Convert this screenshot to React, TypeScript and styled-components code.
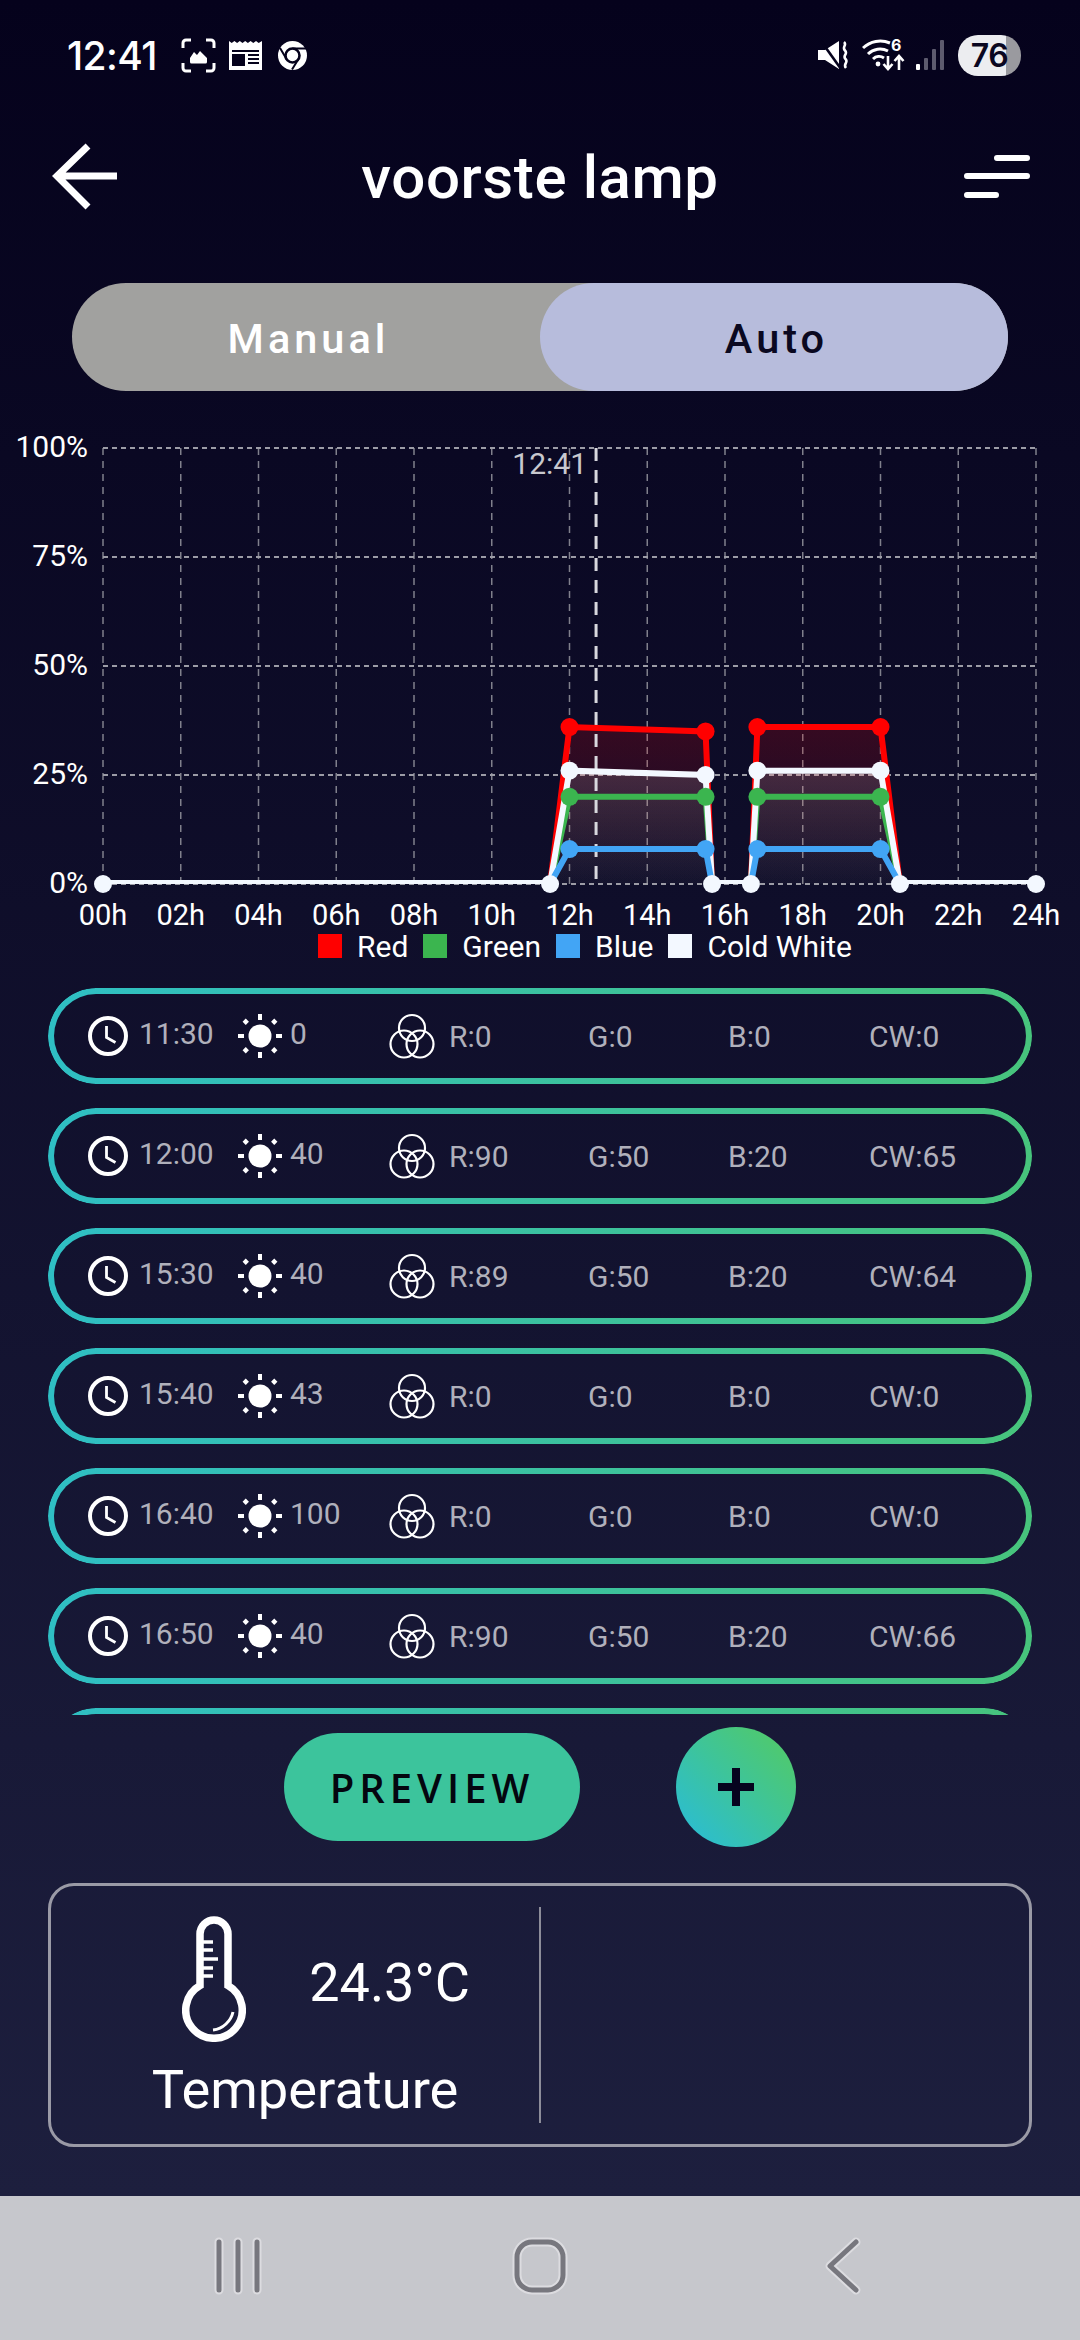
import React from "react";
import styled, { createGlobalStyle } from "styled-components";

const GlobalStyle = createGlobalStyle`
  html, body {
    margin: 0;
    padding: 0;
    background: #c6c7cc;
  }
  * {
    box-sizing: border-box;
  }
`;

const Screen = styled.div`
  width: 1080px;
  height: 2340px;
  display: flex;
  flex-direction: column;
  overflow: hidden;
  font-family: Roboto, "Liberation Sans", sans-serif;
`;

const Main = styled.div`
  height: 2196px;
  display: flex;
  flex-direction: column;
  background: linear-gradient(180deg, #05021c 0%, #1d1f3e 100%);
`;

const StatusBar = styled.div`
  height: 110px;
  display: flex;
  align-items: center;
  justify-content: space-between;
  padding: 0 59px 0 67px;
  color: #fff;
`;

const StatusGroup = styled.div`
  display: flex;
  align-items: center;
`;

const StatusIcon = styled.svg<{ $gap?: number }>`
  display: block;
  margin-left: ${(p) => p.$gap ?? 0}px;
`;

const Clock = styled.span`
  width: 114px;
  font-family: Inter, Roboto, sans-serif;
  font-size: 39px;
  font-weight: 500;
  letter-spacing: -0.6px;
`;

const Battery = styled.span`
  width: 63px;
  height: 41px;
  margin-left: 14px;
  border-radius: 20px;
  display: flex;
  align-items: center;
  justify-content: center;
  background: linear-gradient(90deg, #ecedf0 76%, #9a9a9f 76%);
  color: #0a0720;
  font-family: Inter, Roboto, sans-serif;
  font-size: 32px;
  font-weight: 600;
  letter-spacing: -0.5px;
`;

const Header = styled.div`
  height: 134px;
  display: flex;
  align-items: center;
  justify-content: space-between;
  padding: 0 48px;
`;

const Title = styled.h1`
  margin: 0;
  color: #fff;
  font-size: 60px;
  font-weight: 500;
  letter-spacing: 0.6px;
`;

const ModeToggle = styled.div`
  height: 108px;
  margin: 39px 72px 0;
  display: grid;
  grid-template-columns: 1fr 1fr;
  border-radius: 54px;
  background: #a1a19f;
`;

const ModeOption = styled.div<{ $active?: boolean }>`
  padding: 3px 0 0 5px;
  display: flex;
  align-items: center;
  justify-content: center;
  border-radius: 54px;
  font-size: 41.5px;
  font-weight: 500;
  letter-spacing: 4px;
  color: ${(p) => (p.$active ? "#0a0820" : "#fff")};
  background: ${(p) => (p.$active ? "#b7bcdc" : "transparent")};
`;

const ChartSvg = styled.svg`
  display: block;
  margin-top: 29px;
  width: 1080px;
  height: 510px;
  font-family: Roboto, sans-serif;
`;

const Legend = styled.div`
  height: 34px;
  margin-top: -1px;
  padding-left: 318px;
  display: flex;
  align-items: center;
  gap: 15px;
`;

const LegendItem = styled.div`
  display: flex;
  align-items: center;
  gap: 15px;
  color: #fff;
  font-size: 30px;
`;

const Swatch = styled.span<{ $color: string }>`
  width: 24px;
  height: 24px;
  background: ${(p) => p.$color};
`;

const ScheduleList = styled.div`
  height: 727px;
  margin: 25px 48px 0;
  display: flex;
  flex-direction: column;
  gap: 24px;
  overflow: hidden;
`;

const ScheduleRow = styled.div`
  position: relative;
  flex: none;
  height: 96px;
  padding-left: 40px;
  display: grid;
  grid-template-columns: 150px 151px 60px 139px 140px 141px 1fr;
  align-items: center;
  color: #b0b0bb;
  font-size: 30px;

  &::before {
    content: "";
    position: absolute;
    inset: 0;
    padding: 6px;
    border-radius: 48px;
    background: linear-gradient(90deg, #2fbfc4 0%, #47c47c 100%);
    -webkit-mask:
      linear-gradient(#000 0 0) content-box,
      linear-gradient(#000 0 0);
    -webkit-mask-composite: xor;
    mask-composite: exclude;
  }
`;

const Cell = styled.div`
  display: flex;
  align-items: center;
`;

const TimeCell = styled(Cell)`
  gap: 11px;
`;

const LevelCell = styled(Cell)`
  gap: 8px;
`;

const RaisedValue = styled.span`
  margin-bottom: 6px;
`;

const Channel = styled.span``;

const Actions = styled.div`
  margin-top: 12px;
  display: flex;
  align-items: center;
  justify-content: center;
  gap: 96px;
`;

const PreviewButton = styled.button`
  width: 296px;
  height: 108px;
  border: 0;
  border-radius: 54px;
  background: #3cc49c;
  color: #04060f;
  font-family: "Open Sans", sans-serif;
  font-size: 40px;
  font-weight: 600;
  letter-spacing: 5px;
`;

const AddButton = styled.button`
  width: 120px;
  height: 120px;
  padding: 0;
  border: 0;
  border-radius: 50%;
  display: flex;
  align-items: center;
  justify-content: center;
  background: linear-gradient(45deg, #2cbdd0 10%, #3dc49c 50%, #50c96c 90%);
`;

const SensorCard = styled.div`
  height: 264px;
  margin: 36px 48px 0;
  padding: 21px 0;
  display: grid;
  grid-template-columns: 490px 1fr;
  border: 3px solid #9a9aa6;
  border-radius: 26px;
`;

const SensorPanel = styled.div`
  padding-left: 20px;
  display: flex;
  flex-direction: column;
  align-items: center;
  border-right: 2px solid #8d8d9a;
  color: #fff;
`;

const SensorReading = styled.div`
  display: flex;
  align-items: center;
  gap: 63px;
  margin: 9px 0 0 42px;
  font-size: 54px;
`;

const SensorValue = styled.span`
  margin-top: 6px;
`;

const SensorName = styled.div`
  margin-top: 16px;
  font-size: 54.3px;
`;

const NavBar = styled.div`
  height: 144px;
  display: flex;
  background: #c6c7cc;
`;

const NavSvg = styled.svg`
  display: block;
`;

type Series = { name: string; color: string; values: number[]; fillTop: number };

const hours = [0, 11.5, 12, 15.5, 15.667, 16.667, 16.833, 20, 20.5, 24];

const series: Series[] = [
  { name: "Red", color: "#ff0000", values: [0, 0, 36, 35, 0, 0, 36, 36, 0, 0], fillTop: 0.17 },
  { name: "Green", color: "#3bb54f", values: [0, 0, 20, 20, 0, 0, 20, 20, 0, 0], fillTop: 0.02 },
  { name: "Cold White", color: "#f3f8ff", values: [0, 0, 26, 25, 0, 0, 26, 26, 0, 0], fillTop: 0.13 },
  { name: "Blue", color: "#42a5f5", values: [0, 0, 8, 8, 0, 0, 8, 8, 0, 0], fillTop: 0.02 },
];

const legend = [
  { name: "Red", color: "#ff0000" },
  { name: "Green", color: "#3bb54f" },
  { name: "Blue", color: "#42a5f5" },
  { name: "Cold White", color: "#f3f8ff" },
];

const rows = [
  { time: "11:30", level: 0, r: 0, g: 0, b: 0, cw: 0 },
  { time: "12:00", level: 40, r: 90, g: 50, b: 20, cw: 65 },
  { time: "15:30", level: 40, r: 89, g: 50, b: 20, cw: 64 },
  { time: "15:40", level: 43, r: 0, g: 0, b: 0, cw: 0 },
  { time: "16:40", level: 100, r: 0, g: 0, b: 0, cw: 0 },
  { time: "16:50", level: 40, r: 90, g: 50, b: 20, cw: 66 },
  { time: "20:00", level: 40, r: 90, g: 50, b: 20, cw: 66 },
];

// chart coordinates are relative to the svg, which starts at y=420
const X0 = 103;
const HOUR = 38.875;
const Y0 = 464;
const PERCENT = 4.36;
const px = (h: number) => X0 + h * HOUR;
const py = (v: number) => Y0 - v * PERCENT;

const pointList = (s: Series, from = 0, to = hours.length) =>
  hours
    .slice(from, to)
    .map((h, i) => `${px(h)},${py(s.values[from + i])}`)
    .join(" ");

const Chart = () => {
  const ticks = Array.from({ length: 13 }, (_, i) => i * 2);
  const nowX = px(12 + 41 / 60);
  return (
    <ChartSvg viewBox="0 0 1080 510">
      <defs>
        {series.map((s) => (
          <linearGradient
            key={s.name}
            id={`fill-${s.name.replace(" ", "")}`}
            gradientUnits="userSpaceOnUse"
            x1="0"
            x2="0"
            y1={py(Math.max(...s.values))}
            y2={Y0}
          >
            <stop offset="0" stopColor={s.color} stopOpacity={s.fillTop} />
            <stop offset="1" stopColor={s.color} stopOpacity={0.01} />
          </linearGradient>
        ))}
      </defs>

      {ticks.map((t) => (
        <line key={t} x1={px(t)} x2={px(t)} y1={Y0 - 436} y2={Y0} stroke="#80808c" strokeWidth="1.5" strokeDasharray="7 6" />
      ))}
      {[0, 25, 50, 75, 100].map((v) => (
        <line key={v} x1={X0} x2={px(24)} y1={py(v)} y2={py(v)} stroke="#9c9ca6" strokeWidth="2" strokeDasharray="5 4" />
      ))}

      {series.map((s) => (
        <polygon key={s.name} fill={`url(#fill-${s.name.replace(" ", "")})`} points={pointList(s)} />
      ))}

      <line x1={nowX} x2={nowX} y1={Y0 - 436} y2={Y0} stroke="#d8d8de" strokeWidth="3" strokeDasharray="13 9" />
      <text x={nowX - 9} y="54" fill="#c8c8ce" fontSize="30" textAnchor="end">
        12:41
      </text>

      {series.map((s) => (
        <g key={s.name} fill="none" stroke={s.color} strokeWidth="6">
          <polyline points={pointList(s, 1, 5)} />
          <polyline points={pointList(s, 5, 9)} />
        </g>
      ))}
      <g stroke="#f3f8ff" strokeWidth="4">
        <line x1={X0} x2={px(11.5)} y1={Y0 - 2} y2={Y0 - 2} />
        <line x1={px(15.667)} x2={px(16.667)} y1={Y0 - 2} y2={Y0 - 2} />
        <line x1={px(20.5)} x2={px(24)} y1={Y0 - 2} y2={Y0 - 2} />
      </g>
      {[series[0], series[2], series[1], series[3]].map((s) =>
        hours.map((h, i) =>
          s.values[i] > 0 ? <circle key={s.name + h} cx={px(h)} cy={py(s.values[i])} r="9" fill={s.color} /> : null,
        ),
      )}
      {hours
        .filter((_, i) => series[0].values[i] === 0)
        .map((h) => (
          <circle key={h} cx={px(h)} cy={Y0} r="9" fill="#f3f8ff" />
        ))}

      {[0, 25, 50, 75, 100].map((v) => (
        <text key={v} x="88" y={py(v) + 9} fill="#fff" fontSize="30" textAnchor="end">
          {v}%
        </text>
      ))}
      {ticks.map((t) => (
        <text key={t} x={px(t)} y="505" fill="#fff" fontSize="29" textAnchor="middle">
          {String(t).padStart(2, "0")}h
        </text>
      ))}
    </ChartSvg>
  );
};

const ClockIcon = () => (
  <svg width="40" height="40" viewBox="0 0 40 40" fill="none" stroke="#fff">
    <circle cx="20" cy="20" r="18" strokeWidth="4" />
    <path d="M18.500 10v11.500l9 5" strokeWidth="2.800" />
  </svg>
);

const SunIcon = () => (
  <svg width="44" height="44" viewBox="0 0 44 44" fill="#fff">
    <circle cx="22" cy="22" r="11.500" />
    <rect x="20" y="0" width="4" height="6" />
    <rect x="20" y="38" width="4" height="6" />
    <rect x="0" y="20" width="6" height="4" />
    <rect x="38" y="20" width="6" height="4" />
    <rect x="5.500" y="5.500" width="4.500" height="4.500" transform="rotate(45 7.750 7.750)" />
    <rect x="34" y="5.500" width="4.500" height="4.500" transform="rotate(45 36.250 7.750)" />
    <rect x="5.500" y="34" width="4.500" height="4.500" transform="rotate(45 7.750 36.250)" />
    <rect x="34" y="34" width="4.500" height="4.500" transform="rotate(45 36.250 36.250)" />
  </svg>
);

const MixIcon = () => (
  <svg width="46" height="46" viewBox="0 0 46 46" fill="none" stroke="#fff" strokeWidth="2.200">
    <circle cx="23" cy="15" r="13" />
    <circle cx="15" cy="31" r="13.500" />
    <circle cx="31" cy="31" r="13.500" />
  </svg>
);

const ThermometerIcon = () => (
  <svg width="64" height="126" viewBox="0 0 64 126" fill="none" stroke="#fff">
    <path d="M18 69.500V18a14 14 0 0 1 28 0v51.500a28.250 28.250 0 1 1-28 0Z" strokeWidth="7.500" />
    <path d="M18 26h13M18 34h13M18 43h18M18 52h13M18 60h13" strokeWidth="3.600" />
    <path d="M51 96c-2 9-10 17-20 18" strokeWidth="3" />
  </svg>
);

const App = () => {
  return (
    <>
      <GlobalStyle />
      <Screen>
        <Main>
          <StatusBar>
            <StatusGroup>
              <Clock>12:41</Clock>
              <StatusIcon width="35" height="35" viewBox="0 0 35 35" fill="none" stroke="#fff" strokeWidth="3">
                <path d="M2 10V5a3 3 0 0 1 3-3h5M25 2h5a3 3 0 0 1 3 3v5M33 25v5a3 3 0 0 1-3 3h-5M10 33H5a3 3 0 0 1-3-3v-5" />
                <path d="M9 24v-4l4-6 3 3 3-4 7 7v4a1.500 1.500 0 0 1-1.500 1.500h-14A1.500 1.500 0 0 1 9 24Z" fill="#fff" stroke="none" />
              </StatusIcon>
              <StatusIcon $gap={13} width="33" height="29" viewBox="0 0 33 29">
                <path d="M0 0l2.700 2 2.700-2 2.700 2 2.700-2 2.700 2 2.700-2 2.700 2 2.700-2 2.700 2 2.700-2 2.700 2L33 0v29H0Z" fill="#fff" />
                <path d="M3 9h27v2H3zM3 13h13v12H3zM19 13h11v2H19zM19 17h11v2H19zM19 21h11v2H19z" fill="#05021c" />
              </StatusIcon>
              <StatusIcon $gap={16} width="29" height="29" viewBox="0 0 29 29">
                <circle cx="14.500" cy="14.500" r="14.500" fill="#fff" />
                <circle cx="14.500" cy="14.500" r="7" fill="none" stroke="#05021c" strokeWidth="2.600" />
                <path d="M14.500 7.500H28M20.500 18 14 28.500M8.500 18 2 7" fill="none" stroke="#05021c" strokeWidth="2" />
              </StatusIcon>
            </StatusGroup>
            <StatusGroup>
              <StatusIcon width="30" height="30" viewBox="0 0 30 30" fill="#fff">
                <path d="M0 10h7L21 1v28L7 20H0Z" />
                <path d="M3 1l20 28" stroke="#05021c" strokeWidth="2.600" />
                <path d="M26 2c3.500 3-2.500 5 1 8.500s-3 5 .5 8.500-3 5 .5 9" fill="none" stroke="#fff" strokeWidth="2.600" />
              </StatusIcon>
              <StatusIcon $gap={14} width="44" height="36" viewBox="0 0 44 36" fill="none" stroke="#fff">
                <path d="M1 11a25 25 0 0 1 27-5M6 17a17 17 0 0 1 20-3M11 22a9 9 0 0 1 11-1" strokeWidth="3" />
                <circle cx="16" cy="27" r="2.400" fill="#fff" stroke="none" />
                <text x="29" y="14" fill="#fff" stroke="none" fontFamily="Inter, sans-serif" fontSize="16" fontWeight="700">
                  6
                </text>
                <path d="M26 19v13M21.500 27l4.500 5 4.500-5M37 33V19M32.500 24l4.500-5 4.500 5" strokeWidth="2.600" />
              </StatusIcon>
              <StatusIcon $gap={10} width="28" height="30" viewBox="0 0 28 30">
                <rect x="0" y="24" width="4" height="6" rx="1" fill="#fff" />
                <rect x="8" y="18" width="4" height="12" rx="1" fill="#5d5b6e" />
                <rect x="16" y="9" width="4" height="21" rx="1" fill="#5d5b6e" />
                <rect x="24" y="0" width="4" height="30" rx="1" fill="#5d5b6e" />
              </StatusIcon>
              <Battery>76</Battery>
            </StatusGroup>
          </StatusBar>

          <Header>
            <svg width="72" height="68" viewBox="0 0 72 68" fill="none" stroke="#fff" strokeWidth="7">
              <path d="M40 3 9 33l31 31M9 33h60" />
            </svg>
            <Title>voorste lamp</Title>
            <svg width="72" height="48" viewBox="0 0 72 48" fill="none" stroke="#fff" strokeWidth="6" strokeLinecap="round">
              <path d="M37 5h30M7 23h60M7 42h29" />
            </svg>
          </Header>

          <ModeToggle>
            <ModeOption>Manual</ModeOption>
            <ModeOption $active>Auto</ModeOption>
          </ModeToggle>

          <Chart />
          <Legend>
            {legend.map((l) => (
              <LegendItem key={l.name}>
                <Swatch $color={l.color} />
                {l.name}
              </LegendItem>
            ))}
          </Legend>

          <ScheduleList>
            {rows.map((row) => (
              <ScheduleRow key={row.time}>
                <TimeCell>
                  <ClockIcon />
                  <RaisedValue>{row.time}</RaisedValue>
                </TimeCell>
                <LevelCell>
                  <SunIcon />
                  <RaisedValue>{row.level}</RaisedValue>
                </LevelCell>
                <Cell>
                  <MixIcon />
                </Cell>
                <Channel>R:{row.r}</Channel>
                <Channel>G:{row.g}</Channel>
                <Channel>B:{row.b}</Channel>
                <Channel>CW:{row.cw}</Channel>
              </ScheduleRow>
            ))}
          </ScheduleList>

          <Actions>
            <PreviewButton>PREVIEW</PreviewButton>
            <AddButton aria-label="add">
              <svg width="36" height="38" viewBox="0 0 36 38" fill="none" stroke="#06031e" strokeWidth="8">
                <path d="M18 0v38M0 19h36" />
              </svg>
            </AddButton>
          </Actions>

          <SensorCard>
            <SensorPanel>
              <SensorReading>
                <ThermometerIcon />
                <SensorValue>24.3°C</SensorValue>
              </SensorReading>
              <SensorName>Temperature</SensorName>
            </SensorPanel>
          </SensorCard>
        </Main>

        <NavBar>
          <NavSvg width="1080" height="144" viewBox="0 0 1080 144" fill="none" strokeLinecap="round" strokeLinejoin="round">
            <g stroke="#dcdce0" strokeWidth="9">
              <path d="M219 46v48M238 46v48M257 46v48" />
              <rect x="517" y="46" width="46" height="48" rx="15" />
              <path d="M856 46 830 70l26 24" />
            </g>
            <g stroke="#77777e" strokeWidth="5">
              <path d="M219 46v48M238 46v48M257 46v48" />
              <rect x="517" y="46" width="46" height="48" rx="15" />
              <path d="M856 46 830 70l26 24" />
            </g>
          </NavSvg>
        </NavBar>
      </Screen>
    </>
  );
};

export default App;
